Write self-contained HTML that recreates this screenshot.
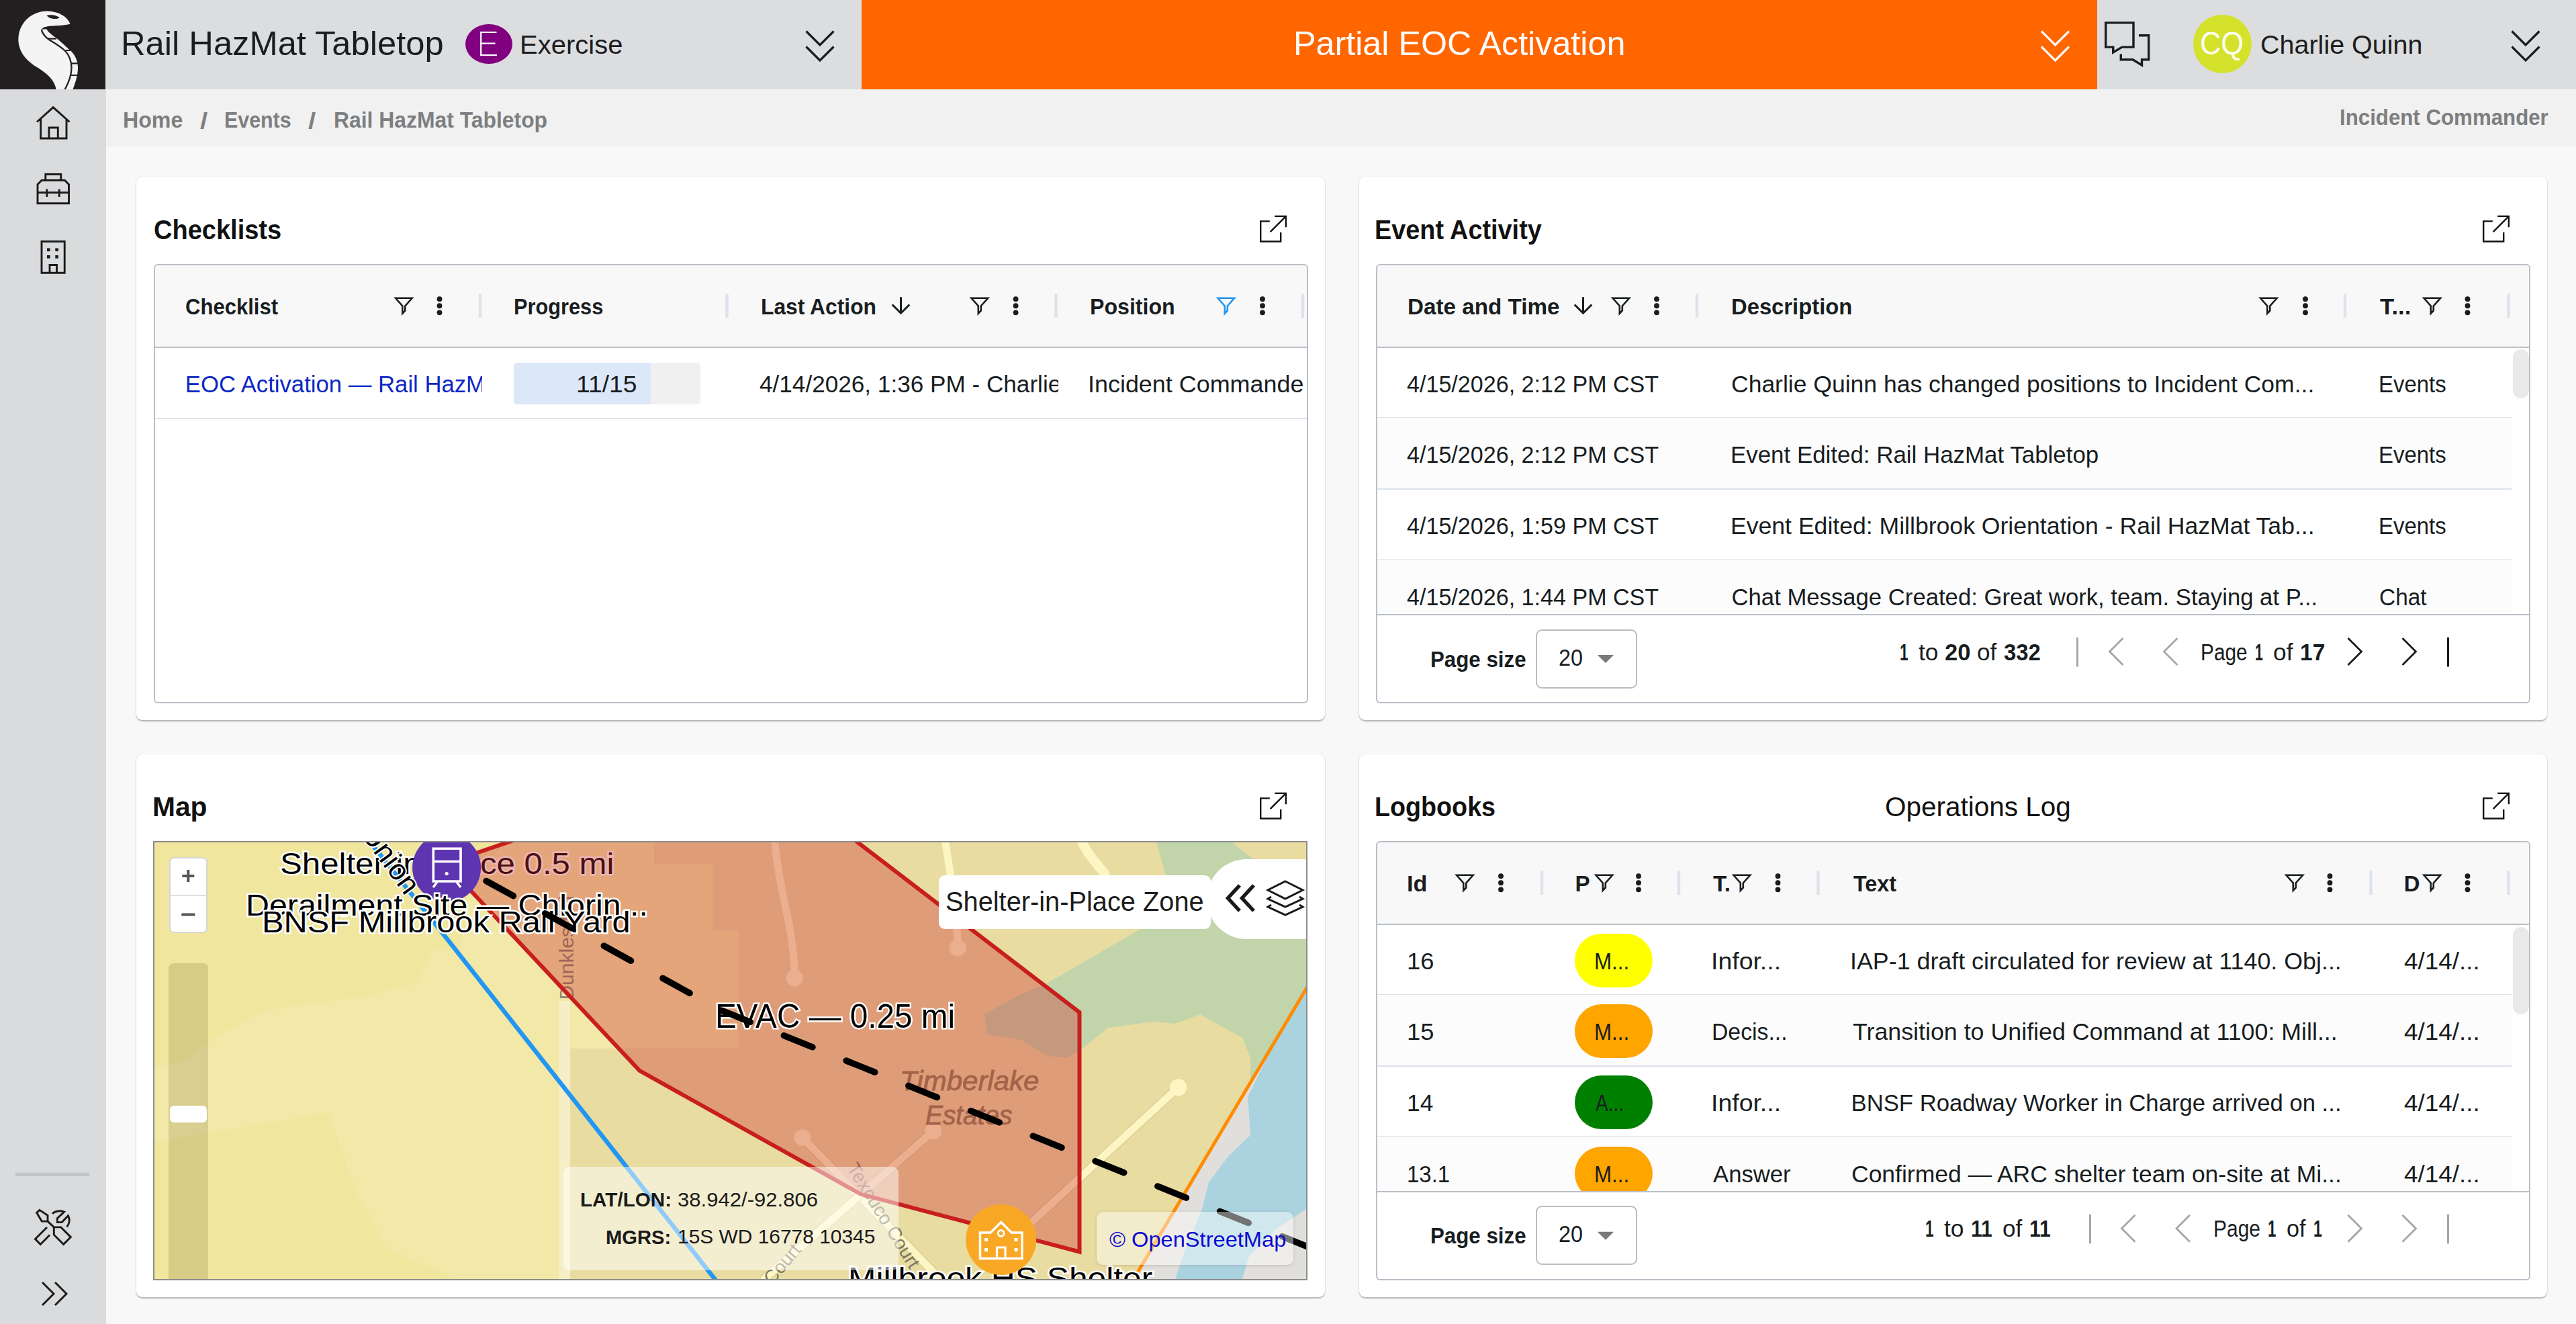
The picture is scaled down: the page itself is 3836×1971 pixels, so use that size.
<!DOCTYPE html><html><head><meta charset="utf-8"><style>
html,body{margin:0;padding:0;}
body{width:3836px;height:1971px;overflow:hidden;background:#f8f8f8;position:relative;font-family:"Liberation Sans",sans-serif;}
.a{position:absolute;}
.t{position:absolute;white-space:nowrap;line-height:1;}
.clip{position:absolute;overflow:hidden;}
.card{background:#fff;border-radius:9px;box-shadow:0 1.5px 2px rgba(0,0,0,0.26),0 0 3px rgba(0,0,0,0.06);}
</style></head><body><div class="a" style="left:158.00px;top:133.00px;width:3678.00px;height:85.00px;background:#f1f1f1;"></div><div class="t" id="t1" style="left:182.55px;top:162.15px;font-size:33px;color:#7d7e80;font-weight:700;transform:scaleX(0.9739);transform-origin:0 0;">Home</div><div class="t" id="t2" style="left:297.50px;top:163.45px;font-size:33px;color:#7d7e80;font-weight:700;transform:scaleX(1.2222);transform-origin:0 0;">/</div><div class="t" id="t3" style="left:334.16px;top:162.15px;font-size:33px;color:#7d7e80;font-weight:700;transform:scaleX(0.9202);transform-origin:0 0;">Events</div><div class="t" id="t4" style="left:458.50px;top:163.45px;font-size:33px;color:#7d7e80;font-weight:700;transform:scaleX(1.2222);transform-origin:0 0;">/</div><div class="t" id="t5" style="left:496.57px;top:162.15px;font-size:33px;color:#7d7e80;font-weight:700;transform:scaleX(0.9655);transform-origin:0 0;">Rail HazMat Tabletop</div><div class="t" id="t6" style="left:3483.61px;top:158.45px;font-size:33px;color:#7d7e80;font-weight:700;transform:scaleX(0.9468);transform-origin:0 0;">Incident Commander</div><div class="a card" style="left:203px;top:263px;width:1769.5px;height:808.5px;"></div><div class="a card" style="left:2023.5px;top:263px;width:1769.5px;height:808.5px;"></div><div class="a card" style="left:203px;top:1122.5px;width:1769.5px;height:808.5px;"></div><div class="a card" style="left:2023.5px;top:1122.5px;width:1769.5px;height:808.5px;"></div><div class="t" id="t7" style="left:228.55px;top:322.00px;font-size:40px;color:#111;font-weight:700;transform:scaleX(0.9502);transform-origin:0 0;">Checklists</div><div class="t" id="t8" style="left:2047.11px;top:322.00px;font-size:40px;color:#111;font-weight:700;transform:scaleX(0.9457);transform-origin:0 0;">Event Activity</div><div class="t" id="t9" style="left:227.46px;top:1180.50px;font-size:40px;color:#111;font-weight:700;transform:scaleX(1.0187);transform-origin:0 0;">Map</div><div class="t" id="t10" style="left:2047.12px;top:1180.50px;font-size:40px;color:#111;font-weight:700;transform:scaleX(0.9423);transform-origin:0 0;">Logbooks</div><div class="t" id="t11" style="left:2807.49px;top:1180.50px;font-size:40px;color:#111;transform:scaleX(1.0120);transform-origin:0 0;">Operations Log</div><div class="a" style="left:228.5px;top:393px;width:1719.0px;height:653.5px;border:2px solid #babfc7;border-radius:6px;box-sizing:border-box;background:#fff;overflow:hidden"><div class="a" style="left:0;top:0;right:0;height:120.5px;background:#f8f8f8;border-bottom:2px solid #babfc7"></div></div><div class="t" id="t12" style="left:276.07px;top:440.39px;font-size:33.3px;color:#181d1f;font-weight:700;transform:scaleX(0.9322);transform-origin:0 0;">Checklist</div><div class="t" id="t13" style="left:765.15px;top:440.39px;font-size:33.3px;color:#181d1f;font-weight:700;transform:scaleX(0.9236);transform-origin:0 0;">Progress</div><div class="t" id="t14" style="left:1133.09px;top:440.39px;font-size:33.3px;color:#181d1f;font-weight:700;transform:scaleX(0.9553);transform-origin:0 0;">Last Action</div><div class="t" id="t15" style="left:1623.07px;top:440.39px;font-size:33.3px;color:#181d1f;font-weight:700;transform:scaleX(0.9649);transform-origin:0 0;">Position</div><div class="a" style="left:230.50px;top:622.00px;width:1715.00px;height:2.00px;background:#dde2eb;"></div><div class="clip" style="left:277.80px;top:520.50px;width:440.70px;height:104.10px;"><div class="t" id="t16" style="left:-2.00px;top:34.70px;font-size:34.7px;color:#0c28c4;">EOC Activation — Rail HazMat Tabletop</div></div><div class="a" style="left:765px;top:540px;width:278px;height:61.5px;border-radius:6px;background:#f0f0f0;overflow:hidden"><div class="a" style="left:0;top:0;width:204px;height:61.5px;background:#dce7f8"></div></div><div class="t" id="t17" style="left:857.85px;top:555.21px;font-size:34.7px;color:#181d1f;transform:scaleX(1.0749);transform-origin:0 0;">11/15</div><div class="clip" style="left:1131.00px;top:520.50px;width:445.00px;height:104.10px;"><div class="t" id="t18" style="left:0.00px;top:34.70px;font-size:34.7px;color:#181d1f;transform:scaleX(1.0130);transform-origin:0 0;">4/14/2026, 1:36 PM - Charlie Quinn</div></div><div class="clip" style="left:1623.00px;top:520.50px;width:318.00px;height:104.10px;"><div class="t" id="t19" style="left:-3.11px;top:34.70px;font-size:34.7px;color:#181d1f;transform:scaleX(1.0355);transform-origin:0 0;">Incident Commander</div></div><div class="a" style="left:2048.5px;top:393px;width:1719.0px;height:653.5px;border:2px solid #babfc7;border-radius:6px;box-sizing:border-box;background:#fff;overflow:hidden"><div class="a" style="left:0;top:0;right:0;height:120.5px;background:#f8f8f8;border-bottom:2px solid #babfc7"></div></div><div class="t" id="t20" style="left:2095.60px;top:440.39px;font-size:33.3px;color:#181d1f;font-weight:700;transform:scaleX(0.9979);transform-origin:0 0;">Date and Time</div><div class="t" id="t21" style="left:2577.53px;top:440.39px;font-size:33.3px;color:#181d1f;font-weight:700;transform:scaleX(0.9843);transform-origin:0 0;">Description</div><div class="t" id="t22" style="left:3544.00px;top:440.39px;font-size:33.3px;color:#181d1f;font-weight:700;transform:scaleX(1.0439);transform-origin:0 0;">T...</div><div class="clip" style="left:0;top:0;width:3836px;height:914.5px"><div class="a" style="left:2050.50px;top:621.10px;width:1689.00px;height:2.00px;background:#dde2eb;"></div><div class="t" id="t23" style="left:2094.80px;top:554.80px;font-size:34.7px;color:#181d1f;transform:scaleX(0.9827);transform-origin:0 0;">4/15/2026, 2:12 PM CST</div><div class="t" id="t24" style="left:2578.48px;top:554.80px;font-size:34.7px;color:#181d1f;transform:scaleX(1.0234);transform-origin:0 0;">Charlie Quinn has changed positions to Incident Com...</div><div class="t" id="t25" style="left:3542.10px;top:554.80px;font-size:34.7px;color:#181d1f;transform:scaleX(0.9499);transform-origin:0 0;">Events</div><div class="a" style="left:2050.50px;top:622.10px;width:1689.00px;height:105.60px;background:#fcfcfc;"></div><div class="a" style="left:2050.50px;top:726.70px;width:1689.00px;height:2.00px;background:#dde2eb;"></div><div class="t" id="t26" style="left:2094.80px;top:660.40px;font-size:34.7px;color:#181d1f;transform:scaleX(0.9827);transform-origin:0 0;">4/15/2026, 2:12 PM CST</div><div class="t" id="t27" style="left:2577.49px;top:660.40px;font-size:34.7px;color:#181d1f;transform:scaleX(1.0058);transform-origin:0 0;">Event Edited: Rail HazMat Tabletop</div><div class="t" id="t28" style="left:3542.10px;top:660.40px;font-size:34.7px;color:#181d1f;transform:scaleX(0.9499);transform-origin:0 0;">Events</div><div class="a" style="left:2050.50px;top:832.30px;width:1689.00px;height:2.00px;background:#dde2eb;"></div><div class="t" id="t29" style="left:2094.80px;top:766.00px;font-size:34.7px;color:#181d1f;transform:scaleX(0.9827);transform-origin:0 0;">4/15/2026, 1:59 PM CST</div><div class="t" id="t30" style="left:2577.45px;top:766.00px;font-size:34.7px;color:#181d1f;transform:scaleX(1.0259);transform-origin:0 0;">Event Edited: Millbrook Orientation - Rail HazMat Tab...</div><div class="t" id="t31" style="left:3542.10px;top:766.00px;font-size:34.7px;color:#181d1f;transform:scaleX(0.9499);transform-origin:0 0;">Events</div><div class="a" style="left:2050.50px;top:833.30px;width:1689.00px;height:105.60px;background:#fcfcfc;"></div><div class="t" id="t32" style="left:2094.80px;top:871.60px;font-size:34.7px;color:#181d1f;transform:scaleX(0.9827);transform-origin:0 0;">4/15/2026, 1:44 PM CST</div><div class="t" id="t33" style="left:2578.50px;top:871.60px;font-size:34.7px;color:#181d1f;">Chat Message Created: Great work, team. Staying at P...</div><div class="t" id="t34" style="left:3543.04px;top:871.60px;font-size:34.7px;color:#181d1f;transform:scaleX(0.9637);transform-origin:0 0;">Chat</div></div><div class="a" style="left:3741.5px;top:520px;width:24px;height:72.5px;border-radius:12px;background:#e9e9e9"></div><div class="a" style="left:2050.50px;top:913.50px;width:1715.00px;height:2.00px;background:#babfc7;"></div><div class="t" id="t35" style="left:2130.32px;top:964.60px;font-size:33.3px;color:#181d1f;font-weight:700;transform:scaleX(0.9393);transform-origin:0 0;">Page size</div><div class="a" style="left:2286.5px;top:936.50px;width:151px;height:88px;border:2.5px solid #bcbcbc;border-radius:9px;box-sizing:border-box;background:#fff"></div><div class="t" id="t36" style="left:2320.87px;top:961.50px;font-size:34.7px;color:#181d1f;transform:scaleX(0.9341);transform-origin:0 0;">20</div><div class="t" id="t37" style="left:2828.99px;top:953.50px;font-size:34.7px;color:#181d1f;font-weight:700;transform:scaleX(0.6529);transform-origin:0 0;">1</div><div class="t" id="t38" style="left:2856.60px;top:953.50px;font-size:34.7px;color:#181d1f;transform:scaleX(1.0167);transform-origin:0 0;">to</div><div class="t" id="t39" style="left:2895.80px;top:953.50px;font-size:34.7px;color:#181d1f;font-weight:700;transform:scaleX(0.9975);transform-origin:0 0;">20</div><div class="t" id="t40" style="left:2943.99px;top:953.50px;font-size:34.7px;color:#181d1f;transform:scaleX(1.0109);transform-origin:0 0;">of</div><div class="t" id="t41" style="left:2983.80px;top:953.50px;font-size:34.7px;color:#181d1f;font-weight:700;transform:scaleX(0.9473);transform-origin:0 0;">332</div><div class="t" id="t42" style="left:3277.18px;top:953.50px;font-size:34.7px;color:#181d1f;transform:scaleX(0.8595);transform-origin:0 0;">Page</div><div class="t" id="t43" style="left:3358.46px;top:953.50px;font-size:34.7px;color:#181d1f;font-weight:700;transform:scaleX(0.6176);transform-origin:0 0;">1</div><div class="t" id="t44" style="left:3384.98px;top:953.50px;font-size:34.7px;color:#181d1f;transform:scaleX(1.0180);transform-origin:0 0;">of</div><div class="t" id="t45" style="left:3424.86px;top:953.50px;font-size:34.7px;color:#181d1f;font-weight:700;transform:scaleX(0.9691);transform-origin:0 0;">17</div><div class="a" style="left:2048.5px;top:1252px;width:1719.0px;height:653.5px;border:2px solid #babfc7;border-radius:6px;box-sizing:border-box;background:#fff;overflow:hidden"><div class="a" style="left:0;top:0;right:0;height:120.5px;background:#f8f8f8;border-bottom:2px solid #babfc7"></div></div><div class="t" id="t46" style="left:2094.94px;top:1299.39px;font-size:33.3px;color:#181d1f;font-weight:700;transform:scaleX(1.0285);transform-origin:0 0;">Id</div><div class="t" id="t47" style="left:2345.50px;top:1299.39px;font-size:33.3px;color:#181d1f;font-weight:700;">P</div><div class="clip" style="left:2551.00px;top:1266.10px;width:24.00px;height:99.90px;"><div class="t" id="t48" style="left:0.00px;top:33.30px;font-size:33.3px;color:#181d1f;font-weight:700;">T.</div></div><div class="t" id="t49" style="left:2759.50px;top:1299.39px;font-size:33.3px;color:#181d1f;font-weight:700;transform:scaleX(0.9711);transform-origin:0 0;">Text</div><div class="clip" style="left:3581.50px;top:1266.10px;width:22.50px;height:99.90px;"><div class="t" id="t50" style="left:-2.00px;top:33.30px;font-size:33.3px;color:#181d1f;font-weight:700;">D.</div></div><div class="clip" style="left:0;top:0;width:3836px;height:1773.5px"><div class="a" style="left:2050.50px;top:1480.10px;width:1689.00px;height:2.00px;background:#dde2eb;"></div><div class="t" id="t51" style="left:2094.90px;top:1413.81px;font-size:34.7px;color:#181d1f;transform:scaleX(1.0484);transform-origin:0 0;">16</div><div class="a" style="left:2345px;top:1389.80px;width:116px;height:80px;border-radius:40px;background:#ffff00"></div><div class="t" id="t52" style="left:2374.19px;top:1413.81px;font-size:34.7px;color:#181d1f;transform:scaleX(0.9028);transform-origin:0 0;">M...</div><div class="t" id="t53" style="left:2547.76px;top:1413.81px;font-size:34.7px;color:#181d1f;transform:scaleX(1.0797);transform-origin:0 0;">Infor...</div><div class="t" id="t54" style="left:2755.40px;top:1413.81px;font-size:34.7px;color:#181d1f;transform:scaleX(1.0324);transform-origin:0 0;">IAP-1 draft circulated for review at 1140. Obj...</div><div class="t" id="t55" style="left:3580.00px;top:1413.81px;font-size:34.7px;color:#181d1f;transform:scaleX(1.0636);transform-origin:0 0;">4/14/...</div><div class="a" style="left:2050.50px;top:1481.10px;width:1689.00px;height:105.60px;background:#fcfcfc;"></div><div class="a" style="left:2050.50px;top:1585.70px;width:1689.00px;height:2.00px;background:#dde2eb;"></div><div class="t" id="t56" style="left:2094.90px;top:1519.40px;font-size:34.7px;color:#181d1f;transform:scaleX(1.0484);transform-origin:0 0;">15</div><div class="a" style="left:2345px;top:1495.40px;width:116px;height:80px;border-radius:40px;background:#ffa500"></div><div class="t" id="t57" style="left:2374.19px;top:1519.40px;font-size:34.7px;color:#181d1f;transform:scaleX(0.9028);transform-origin:0 0;">M...</div><div class="t" id="t58" style="left:2549.05px;top:1519.40px;font-size:34.7px;color:#181d1f;transform:scaleX(0.9729);transform-origin:0 0;">Decis...</div><div class="t" id="t59" style="left:2758.50px;top:1519.40px;font-size:34.7px;color:#181d1f;transform:scaleX(1.0313);transform-origin:0 0;">Transition to Unified Command at 1100: Mill...</div><div class="t" id="t60" style="left:3580.00px;top:1519.40px;font-size:34.7px;color:#181d1f;transform:scaleX(1.0636);transform-origin:0 0;">4/14/...</div><div class="a" style="left:2050.50px;top:1691.30px;width:1689.00px;height:2.00px;background:#dde2eb;"></div><div class="t" id="t61" style="left:2094.96px;top:1625.01px;font-size:34.7px;color:#181d1f;transform:scaleX(1.0195);transform-origin:0 0;">14</div><div class="a" style="left:2345px;top:1601.00px;width:116px;height:80px;border-radius:40px;background:#008000"></div><div class="t" id="t62" style="left:2376.00px;top:1625.01px;font-size:34.7px;color:#181d1f;transform:scaleX(0.8095);transform-origin:0 0;">A...</div><div class="t" id="t63" style="left:2547.76px;top:1625.01px;font-size:34.7px;color:#181d1f;transform:scaleX(1.0797);transform-origin:0 0;">Infor...</div><div class="t" id="t64" style="left:2756.50px;top:1625.01px;font-size:34.7px;color:#181d1f;">BNSF Roadway Worker in Charge arrived on ...</div><div class="t" id="t65" style="left:3580.00px;top:1625.01px;font-size:34.7px;color:#181d1f;transform:scaleX(1.0636);transform-origin:0 0;">4/14/...</div><div class="a" style="left:2050.50px;top:1692.30px;width:1689.00px;height:105.60px;background:#fcfcfc;"></div><div class="t" id="t66" style="left:2095.10px;top:1730.61px;font-size:34.7px;color:#181d1f;transform:scaleX(0.9499);transform-origin:0 0;">13.1</div><div class="a" style="left:2345px;top:1706.60px;width:116px;height:80px;border-radius:40px;background:#ffa500"></div><div class="t" id="t67" style="left:2374.19px;top:1730.61px;font-size:34.7px;color:#181d1f;transform:scaleX(0.9028);transform-origin:0 0;">M...</div><div class="t" id="t68" style="left:2551.00px;top:1730.61px;font-size:34.7px;color:#181d1f;">Answer</div><div class="t" id="t69" style="left:2757.48px;top:1730.61px;font-size:34.7px;color:#181d1f;transform:scaleX(1.0231);transform-origin:0 0;">Confirmed — ARC shelter team on-site at Mi...</div><div class="t" id="t70" style="left:3580.00px;top:1730.61px;font-size:34.7px;color:#181d1f;transform:scaleX(1.0636);transform-origin:0 0;">4/14/...</div></div><div class="a" style="left:3741.5px;top:1380px;width:24px;height:130px;border-radius:12px;background:#e9e9e9"></div><div class="a" style="left:2050.50px;top:1772.50px;width:1715.00px;height:2.00px;background:#babfc7;"></div><div class="t" id="t71" style="left:2130.32px;top:1823.35px;font-size:33.3px;color:#181d1f;font-weight:700;transform:scaleX(0.9393);transform-origin:0 0;">Page size</div><div class="a" style="left:2286.5px;top:1795.25px;width:151px;height:88px;border:2.5px solid #bcbcbc;border-radius:9px;box-sizing:border-box;background:#fff"></div><div class="t" id="t72" style="left:2320.87px;top:1820.26px;font-size:34.7px;color:#181d1f;transform:scaleX(0.9341);transform-origin:0 0;">20</div><div class="t" id="t73" style="left:2867.31px;top:1812.26px;font-size:34.7px;color:#181d1f;font-weight:700;transform:scaleX(0.6471);transform-origin:0 0;">1</div><div class="t" id="t74" style="left:2894.60px;top:1812.26px;font-size:34.7px;color:#181d1f;transform:scaleX(1.0204);transform-origin:0 0;">to</div><div class="t" id="t75" style="left:2935.27px;top:1812.26px;font-size:34.7px;color:#181d1f;font-weight:700;transform:scaleX(0.8669);transform-origin:0 0;">11</div><div class="t" id="t76" style="left:2981.99px;top:1812.26px;font-size:34.7px;color:#181d1f;transform:scaleX(1.0109);transform-origin:0 0;">of</div><div class="t" id="t77" style="left:3022.07px;top:1812.26px;font-size:34.7px;color:#181d1f;font-weight:700;transform:scaleX(0.8669);transform-origin:0 0;">11</div><div class="t" id="t78" style="left:3296.17px;top:1812.26px;font-size:34.7px;color:#181d1f;transform:scaleX(0.8634);transform-origin:0 0;">Page</div><div class="t" id="t79" style="left:3377.32px;top:1812.26px;font-size:34.7px;color:#181d1f;font-weight:700;transform:scaleX(0.6412);transform-origin:0 0;">1</div><div class="t" id="t80" style="left:3404.81px;top:1812.26px;font-size:34.7px;color:#181d1f;transform:scaleX(0.9862);transform-origin:0 0;">of</div><div class="t" id="t81" style="left:3444.77px;top:1812.26px;font-size:34.7px;color:#181d1f;font-weight:700;transform:scaleX(0.6647);transform-origin:0 0;">1</div><div class="clip" style="left:230px;top:1254px;width:1715px;height:650px"><div class="a" style="left:-230px;top:-1254px;width:3836px;height:1971px"><svg class="a" style="left:230px;top:1254px" width="1715" height="650" viewBox="230 1254 1715 650"><rect x="230" y="1254" width="1715" height="650" fill="#f2e8a7"/><path d="M230 1254 H760 L700 1300 L684.7 1416.7 L644.7 1413 L621 1463 L544.7 1483 L394.7 1503 L311 1550 L278 1577 L230 1590 Z" fill="#f0e69d"/><path d="M230 1700 L489 1657 L528 1769 L576 1859 L678 1904 L230 1904 Z" fill="#f0e69d"/><path d="M974 1254 H1945 V1904 H849 V1560.7 H1099.6 V1384.8 H1061.3 V1285.7 H974 Z" fill="#e9dca1"/><path d="M1722 1254 L1835 1254 L1880 1290 L1945 1300 L1945 1640 L1862 1640 L1862 1575 L1850 1545 L1787 1510 L1750 1524 L1717 1521 L1650 1530 L1610 1562 L1590 1575 L1560 1572 L1520 1548 L1470 1540 L1466 1510 L1520 1480 L1557 1465 L1695 1385 L1740 1360 L1735 1300 Z" fill="#c2d5aa"/><path d="M1945 1470 L1690.6 1904 L1945 1904 Z" fill="#e0dfdc"/><path d="M1945 1465 L1945 1800 L1900 1830 L1860 1870 L1850 1904 L1750 1904 L1765 1860 L1790 1800 L1800 1760 L1830 1720 L1862 1690 L1858 1633 L1900 1548 Z" fill="#aad3df"/><rect x="832" y="1490" width="17" height="414" fill="#f6eec6"/><path d="M1754.7 1618.8 L1470 1880" stroke="#dccf98" stroke-width="14" fill="none" stroke-linecap="round"/><path d="M1754.7 1618.8 L1470 1880" stroke="#fdf6c4" stroke-width="11" fill="none" stroke-linecap="round"/><circle cx="1754.7" cy="1618.8" r="12.5" fill="#fdf6c4"/><path d="M1195 1693.4 L1400 1904" stroke="#dccf98" stroke-width="14" fill="none" stroke-linecap="round"/><path d="M1195 1693.4 L1400 1904" stroke="#fdf6c4" stroke-width="11" fill="none" stroke-linecap="round"/><circle cx="1195" cy="1693.4" r="12.5" fill="#fdf6c4"/><path d="M1389.8 1683.8 L1138 1904" stroke="#dccf98" stroke-width="14" fill="none" stroke-linecap="round"/><path d="M1389.8 1683.8 L1138 1904" stroke="#fdf6c4" stroke-width="11" fill="none" stroke-linecap="round"/><circle cx="1389.8" cy="1683.8" r="12.5" fill="#fdf6c4"/><path d="M1153.8 1254 C1160 1330 1183 1380 1183 1456" stroke="#fdf6c4" stroke-width="11" fill="none" stroke-linecap="round"/><circle cx="1183" cy="1456" r="12.5" fill="#fdf6c4"/><path d="M1407.7 1254 C1415 1300 1426 1360 1426 1411" stroke="#fdf6c4" stroke-width="11" fill="none" stroke-linecap="round"/><circle cx="1426" cy="1411" r="12.5" fill="#fdf6c4"/><path d="M1610 1250 C1618 1270 1632 1285 1645 1300" stroke="#fdf6c4" stroke-width="14" fill="none" stroke-linecap="round"/></svg><div class="t" id="t82" style="left:416.81px;top:1263.45px;font-size:45px;color:#000;-webkit-text-stroke:5px #ffffff;paint-order:stroke fill;transform:scaleX(1.0929);transform-origin:0 0;">Shelter-in-Place 0.5 mi</div><div class="t" style="left:764px;top:1396px;font-size:30px;color:#8a8470;transform:rotate(-90deg);transform-origin:50% 50%;width:160px;text-align:center">Dunkles Rd</div><div class="t" id="t83" style="left:1339.65px;top:1589.00px;font-size:40px;color:#8f7f5a;font-style:italic;-webkit-text-stroke:0.8px #8f7f5a;transform:scaleX(1.0505);transform-origin:0 0;">Timberlake</div><div class="t" id="t84" style="left:1377.83px;top:1640.00px;font-size:40px;color:#8f7f5a;font-style:italic;-webkit-text-stroke:0.8px #8f7f5a;transform:scaleX(0.9706);transform-origin:0 0;">Estates</div><div class="t" style="left:1228px;top:1792px;font-size:28px;color:#7c7766;transform:rotate(58deg);transform-origin:50% 50%;width:170px;text-align:center">Texcuco Court</div><div class="t" style="left:1120px;top:1868px;font-size:28px;color:#7c7766;transform:rotate(-50deg);transform-origin:50% 50%;width:90px;text-align:center">Court</div><svg class="a" style="left:230px;top:1254px" width="1715" height="650" viewBox="230 1254 1715 650"><path d="M695.4 1320 L708.7 1270 L797 1240 L1259 1240 L1607.5 1507 L1607.5 1863.5 L1282 1777.8 L952.4 1593.9 Z" fill="rgba(203,47,47,0.36)" stroke="#c81e1e" stroke-width="6" stroke-linejoin="miter"/><path d="M548.5 1250 L662 1393 L1066 1906" stroke="#2196f3" stroke-width="6.5" fill="none"/><path d="M1950 1463.7 L1687 1906" stroke="#ff8c00" stroke-width="5" fill="none"/></svg><svg class="a" style="left:230px;top:1254px" width="1715" height="650" viewBox="230 1254 1715 650">
<circle cx="665.1" cy="1291.7" r="51" fill="#5e35b1"/>
<path d="M645.3 1263.3 H686 V1312 H645.3 Z M645.3 1282.5 H686" fill="none" stroke="#fff" stroke-width="3.6"/>
<circle cx="665.2" cy="1300.5" r="2.6" fill="#fff"/>
<path d="M651 1313 L645 1321 M680 1313 L686 1321" stroke="#fff" stroke-width="3.4"/>
</svg><div class="t" style="left:521.5px;top:1257px;width:120px;height:44px;text-align:center;font-size:44px;color:#000;-webkit-text-stroke:4px #fff;paint-order:stroke fill;transform:rotate(54deg);transform-origin:50% 50%;">Union</div><div class="t" id="t85" style="left:366.38px;top:1324.85px;font-size:45px;color:#000;-webkit-text-stroke:5px #ffffff;paint-order:stroke fill;transform:scaleX(1.0740);transform-origin:0 0;">Derailment Site — Chlorin...</div><div class="t" id="t86" style="left:390.45px;top:1350.15px;font-size:45px;color:#000;-webkit-text-stroke:5px #ffffff;paint-order:stroke fill;transform:scaleX(1.0842);transform-origin:0 0;">BNSF Millbrook Rail Yard</div><div class="t" id="t87" style="left:1065.38px;top:1487.80px;font-size:50px;color:#000;-webkit-text-stroke:5px #ffffff;paint-order:stroke fill;transform:scaleX(0.9545);transform-origin:0 0;">EVAC — 0.25 mi</div><div class="t" id="t88" style="left:1263.48px;top:1879.75px;font-size:45px;color:#000;-webkit-text-stroke:5px #ffffff;paint-order:stroke fill;transform:scaleX(1.1052);transform-origin:0 0;">Millbrook HS Shelter</div><svg class="a" style="left:230px;top:1254px" width="1715" height="650" viewBox="230 1254 1715 650"><path d="M724.1 1311.5 L1072 1503.2 L1960 1861.1" stroke="#000" stroke-width="9.5" stroke-linecap="round" stroke-linejoin="round" stroke-dasharray="46 54" fill="none"/></svg><svg class="a" style="left:230px;top:1254px" width="1715" height="650" viewBox="230 1254 1715 650">
<circle cx="1490.7" cy="1845.5" r="52.5" fill="#f9a825"/>
<path d="M1459.5 1873.5 V1835 H1475 L1490.7 1819.5 L1506.4 1835 H1522 V1873.5 Z" fill="none" stroke="#fff" stroke-width="3.4"/>
<circle cx="1490.7" cy="1836" r="4.5" fill="none" stroke="#fff" stroke-width="2.8"/>
<path d="M1484.5 1873.5 V1857 H1497 V1873.5" fill="none" stroke="#fff" stroke-width="3.2"/>
<rect x="1466" y="1843" width="5" height="5" fill="#fff"/><rect x="1510.5" y="1843" width="5" height="5" fill="#fff"/>
<rect x="1466" y="1858" width="5" height="5" fill="#fff"/><rect x="1510.5" y="1858" width="5" height="5" fill="#fff"/>
</svg><div class="a" style="left:252px;top:1276px;width:56.7px;height:113.3px;border-radius:7px;background:#fff;border:2px solid rgba(0,0,0,0.16);box-sizing:border-box"></div><div class="a" style="left:254.00px;top:1332.00px;width:52.70px;height:2.00px;background:rgba(0,0,0,0.12);"></div><svg class="a" style="left:252px;top:1276px" width="57" height="114" viewBox="252 1276 57 114"><path d="M280.3 1295 V1313 M271.3 1304 H289.3" stroke="#555" stroke-width="4"/><path d="M270.3 1361.5 H290.3" stroke="#555" stroke-width="4"/></svg><div class="a" style="left:250.7px;top:1434px;width:59px;height:500px;border-radius:8px;background:rgba(60,50,0,0.14)"></div><div class="a" style="left:253px;top:1646px;width:55.3px;height:24.7px;border-radius:6px;background:#fff"></div><div class="a" style="left:1797px;top:1278.7px;width:200px;height:119.3px;border-radius:60px;background:#fff"></div><div class="a" style="left:1398px;top:1303px;width:405px;height:80px;border-radius:9px;background:#fff"></div><div class="t" id="t89" style="left:1407.53px;top:1321.95px;font-size:41px;color:#1c1c1c;transform:scaleX(0.9702);transform-origin:0 0;">Shelter-in-Place Zone</div><svg class="a" style="left:1800px;top:1290px" width="146" height="90" viewBox="1800 1290 146 90">
<path d="M1846 1318 L1828.5 1337 L1846 1356 M1867 1318 L1849.5 1337 L1867 1356" fill="none" stroke="#1a1a1a" stroke-width="5.5"/>
<path d="M1914 1312 L1940 1325 L1914 1338 L1888 1325 Z" fill="none" stroke="#1a1a1a" stroke-width="3"/>
<path d="M1893 1335 L1888 1338 L1914 1350 L1940 1338 L1935 1335 M1893 1347 L1888 1350 L1914 1362 L1940 1350 L1935 1347" fill="none" stroke="#1a1a1a" stroke-width="3"/>
</svg><div class="a" style="left:839px;top:1737px;width:498.7px;height:154px;border-radius:9px;background:rgba(255,255,255,0.5)"></div><div class="t" id="t90" style="left:863.62px;top:1771.30px;font-size:30px;color:#1a1a1a;font-weight:700;transform:scaleX(0.9884);transform-origin:0 0;">LAT/LON:</div><div class="t" id="t91" style="left:1008.66px;top:1770.80px;font-size:30px;color:#1a1a1a;transform:scaleX(1.0357);transform-origin:0 0;">38.942/-92.806</div><div class="t" id="t92" style="left:902.45px;top:1827.00px;font-size:30px;color:#1a1a1a;font-weight:700;transform:scaleX(0.9729);transform-origin:0 0;">MGRS:</div><div class="t" id="t93" style="left:1009.01px;top:1826.20px;font-size:30px;color:#1a1a1a;transform:scaleX(0.9972);transform-origin:0 0;">15S WD 16778 10345</div><div class="a" style="left:1633px;top:1804.3px;width:293px;height:79.2px;border-radius:9px;background:rgba(255,255,255,0.45);box-shadow:0 1px 5px rgba(0,0,0,0.15)"></div><div class="t" id="t94" style="left:1651.50px;top:1829.40px;font-size:32px;color:#0b0bd0;transform:scaleX(1.0191);transform-origin:0 0;">© OpenStreetMap</div><div class="a" style="left:228px;top:1252px;width:1719px;height:654px;border:2px solid #8c8c8c;box-sizing:border-box"></div></div></div><div class="a" style="left:228px;top:1252px;width:1719px;height:654px;border:2px solid #8c8c8c;box-sizing:border-box"></div><svg class="a" style="left:0;top:0" width="3836" height="1971" viewBox="0 0 3836 1971"><path d="M1890.8 329.4 H1877.2 V359.5 H1907.2 V346.1 M1891.7 345.2 L1914.9 321.9 M1898.3 321.9 H1914.9 V338.2" fill="none" stroke="#111" stroke-width="2.4"/><path d="M3711.8 329.4 H3698.2 V359.5 H3728.2 V346.1 M3712.7 345.2 L3735.9 321.9 M3719.3 321.9 H3735.9 V338.2" fill="none" stroke="#111" stroke-width="2.4"/><path d="M1890.8 1188.4 H1877.2 V1218.5 H1907.2 V1205.1 M1891.7 1204.2 L1914.9 1180.9 M1898.3 1180.9 H1914.9 V1197.2" fill="none" stroke="#111" stroke-width="2.4"/><path d="M3711.8 1188.4 H3698.2 V1218.5 H3728.2 V1205.1 M3712.7 1204.2 L3735.9 1180.9 M3719.3 1180.9 H3735.9 V1197.2" fill="none" stroke="#111" stroke-width="2.4"/><path d="M589.0 443.75 H613.7 L603.3 455.45 V462.45 L599.3 466.75 V455.45 Z" fill="none" stroke="#181d1f" stroke-width="2.6" stroke-linejoin="miter"/><circle cx="654.5" cy="445.15" r="3.9" fill="#181d1f"/><circle cx="654.5" cy="455.25" r="3.9" fill="#181d1f"/><circle cx="654.5" cy="465.35" r="3.9" fill="#181d1f"/><rect x="712.75" y="437.45" width="4.5" height="35.6" fill="#dde2eb"/><rect x="1080.25" y="437.45" width="4.5" height="35.6" fill="#dde2eb"/><path d="M1341.5 442.25 V466.75 M1328.7 453.45 L1341.5 466.25 L1354.3 453.45" fill="none" stroke="#181d1f" stroke-width="3"/><path d="M1446.5 443.75 H1471.2 L1460.8 455.45 V462.45 L1456.8 466.75 V455.45 Z" fill="none" stroke="#181d1f" stroke-width="2.6" stroke-linejoin="miter"/><circle cx="1512.6" cy="445.15" r="3.9" fill="#181d1f"/><circle cx="1512.6" cy="455.25" r="3.9" fill="#181d1f"/><circle cx="1512.6" cy="465.35" r="3.9" fill="#181d1f"/><rect x="1570.25" y="437.45" width="4.5" height="35.6" fill="#dde2eb"/><path d="M1813.5 443.75 H1838.2 L1827.8 455.45 V462.45 L1823.8 466.75 V455.45 Z" fill="none" stroke="#2196f3" stroke-width="2.6" stroke-linejoin="miter"/><circle cx="1880" cy="445.15" r="3.9" fill="#181d1f"/><circle cx="1880" cy="455.25" r="3.9" fill="#181d1f"/><circle cx="1880" cy="465.35" r="3.9" fill="#181d1f"/><rect x="1937.75" y="437.45" width="4.5" height="35.6" fill="#dde2eb"/><path d="M2357.5 442.25 V466.75 M2344.7 453.45 L2357.5 466.25 L2370.3 453.45" fill="none" stroke="#181d1f" stroke-width="3"/><path d="M2401.5 443.75 H2426.2 L2415.8 455.45 V462.45 L2411.8 466.75 V455.45 Z" fill="none" stroke="#181d1f" stroke-width="2.6" stroke-linejoin="miter"/><circle cx="2467" cy="445.15" r="3.9" fill="#181d1f"/><circle cx="2467" cy="455.25" r="3.9" fill="#181d1f"/><circle cx="2467" cy="465.35" r="3.9" fill="#181d1f"/><rect x="2524.75" y="437.45" width="4.5" height="35.6" fill="#dde2eb"/><path d="M3366.0 443.75 H3390.7 L3380.3 455.45 V462.45 L3376.3 466.75 V455.45 Z" fill="none" stroke="#181d1f" stroke-width="2.6" stroke-linejoin="miter"/><circle cx="3433" cy="445.15" r="3.9" fill="#181d1f"/><circle cx="3433" cy="455.25" r="3.9" fill="#181d1f"/><circle cx="3433" cy="465.35" r="3.9" fill="#181d1f"/><rect x="3489.75" y="437.45" width="4.5" height="35.6" fill="#dde2eb"/><path d="M3609.5 443.75 H3634.2 L3623.8 455.45 V462.45 L3619.8 466.75 V455.45 Z" fill="none" stroke="#181d1f" stroke-width="2.6" stroke-linejoin="miter"/><circle cx="3674.5" cy="445.15" r="3.9" fill="#181d1f"/><circle cx="3674.5" cy="455.25" r="3.9" fill="#181d1f"/><circle cx="3674.5" cy="465.35" r="3.9" fill="#181d1f"/><rect x="3733.25" y="437.45" width="4.5" height="35.6" fill="#dde2eb"/><path d="M2378.8 975.0 H2403.1 L2390.95 987.1 Z" fill="#7a7a7a"/><rect x="3092" y="949.0" width="3" height="43.5" fill="#a6a6a6"/><path d="M3161.5 950.0 L3141.5 970.0 L3161.5 990.0" fill="none" stroke="#a6a6a6" stroke-width="2.8"/><path d="M3242.5 950.0 L3222.5 970.0 L3242.5 990.0" fill="none" stroke="#a6a6a6" stroke-width="2.8"/><path d="M3496.5 950.0 L3516.5 970.0 L3496.5 990.0" fill="none" stroke="#181d1f" stroke-width="2.8"/><path d="M3577.5 950.0 L3597.5 970.0 L3577.5 990.0" fill="none" stroke="#181d1f" stroke-width="2.8"/><rect x="3644" y="949.0" width="3" height="43.5" fill="#181d1f"/><path d="M2169.0 1302.75 H2193.7 L2183.3 1314.45 V1321.45 L2179.3 1325.75 V1314.45 Z" fill="none" stroke="#181d1f" stroke-width="2.6" stroke-linejoin="miter"/><circle cx="2235" cy="1304.15" r="3.9" fill="#181d1f"/><circle cx="2235" cy="1314.25" r="3.9" fill="#181d1f"/><circle cx="2235" cy="1324.35" r="3.9" fill="#181d1f"/><rect x="2293.75" y="1296.45" width="4.5" height="35.6" fill="#dde2eb"/><path d="M2376.5 1302.75 H2401.2 L2390.8 1314.45 V1321.45 L2386.8 1325.75 V1314.45 Z" fill="none" stroke="#181d1f" stroke-width="2.6" stroke-linejoin="miter"/><circle cx="2440" cy="1304.15" r="3.9" fill="#181d1f"/><circle cx="2440" cy="1314.25" r="3.9" fill="#181d1f"/><circle cx="2440" cy="1324.35" r="3.9" fill="#181d1f"/><rect x="2497.75" y="1296.45" width="4.5" height="35.6" fill="#dde2eb"/><path d="M2581.5 1302.75 H2606.2 L2595.8 1314.45 V1321.45 L2591.8 1325.75 V1314.45 Z" fill="none" stroke="#181d1f" stroke-width="2.6" stroke-linejoin="miter"/><circle cx="2647.5" cy="1304.15" r="3.9" fill="#181d1f"/><circle cx="2647.5" cy="1314.25" r="3.9" fill="#181d1f"/><circle cx="2647.5" cy="1324.35" r="3.9" fill="#181d1f"/><rect x="2705.25" y="1296.45" width="4.5" height="35.6" fill="#dde2eb"/><path d="M3404.5 1302.75 H3429.2 L3418.8 1314.45 V1321.45 L3414.8 1325.75 V1314.45 Z" fill="none" stroke="#181d1f" stroke-width="2.6" stroke-linejoin="miter"/><circle cx="3469.5" cy="1304.15" r="3.9" fill="#181d1f"/><circle cx="3469.5" cy="1314.25" r="3.9" fill="#181d1f"/><circle cx="3469.5" cy="1324.35" r="3.9" fill="#181d1f"/><rect x="3528.25" y="1296.45" width="4.5" height="35.6" fill="#dde2eb"/><path d="M3609.5 1302.75 H3634.2 L3623.8 1314.45 V1321.45 L3619.8 1325.75 V1314.45 Z" fill="none" stroke="#181d1f" stroke-width="2.6" stroke-linejoin="miter"/><circle cx="3674.5" cy="1304.15" r="3.9" fill="#181d1f"/><circle cx="3674.5" cy="1314.25" r="3.9" fill="#181d1f"/><circle cx="3674.5" cy="1324.35" r="3.9" fill="#181d1f"/><rect x="3733.25" y="1296.45" width="4.5" height="35.6" fill="#dde2eb"/><path d="M2378.8 1833.75 H2403.1 L2390.95 1845.85 Z" fill="#7a7a7a"/><rect x="3111" y="1807.75" width="3" height="43.5" fill="#a6a6a6"/><path d="M3179.5 1808.75 L3159.5 1828.75 L3179.5 1848.75" fill="none" stroke="#a6a6a6" stroke-width="2.8"/><path d="M3261.0 1808.75 L3241.0 1828.75 L3261.0 1848.75" fill="none" stroke="#a6a6a6" stroke-width="2.8"/><path d="M3496.5 1808.75 L3516.5 1828.75 L3496.5 1848.75" fill="none" stroke="#a6a6a6" stroke-width="2.8"/><path d="M3577.5 1808.75 L3597.5 1828.75 L3577.5 1848.75" fill="none" stroke="#a6a6a6" stroke-width="2.8"/><rect x="3644" y="1807.75" width="3" height="43.5" fill="#a6a6a6"/></svg><div class="a" style="left:156.50px;top:0.00px;width:1126.00px;height:133.00px;background:#dcdddf;"></div><div class="a" style="left:1282.50px;top:0.00px;width:1840.50px;height:133.00px;background:#ff6600;"></div><div class="a" style="left:3123.00px;top:0.00px;width:713.00px;height:133.00px;background:#dcdddf;"></div><div class="t" id="t95" style="left:180.35px;top:40.25px;font-size:50px;color:#1b1c1e;transform:scaleX(1.0132);transform-origin:0 0;">Rail HazMat Tabletop</div><div class="a" style="left:692.8px;top:36px;width:70.2px;height:59.4px;border-radius:50%;background:#800080"></div><svg class="a" style="left:700px;top:40px" width="50" height="50" viewBox="700 40 50 50"><path d="M739.5 48 H716.2 V82 H740 M716.2 64.6 H737.5" fill="none" stroke="#fff" stroke-width="2.2"/></svg><div class="t" id="t96" style="left:773.92px;top:46.65px;font-size:39px;color:#1b1c1e;transform:scaleX(1.0259);transform-origin:0 0;">Exercise</div><div class="t" id="t97" style="left:1926.28px;top:40.40px;font-size:50px;color:#fff;transform:scaleX(1.0051);transform-origin:0 0;">Partial EOC Activation</div><div class="t" id="t98" style="left:3365.99px;top:47.05px;font-size:39px;color:#1b1c1e;transform:scaleX(1.0129);transform-origin:0 0;">Charlie Quinn</div><div class="a" style="left:3266px;top:21.6px;width:87px;height:87px;border-radius:50%;background:#d5e22b"></div><div class="t" id="t99" style="left:3275.99px;top:41.40px;font-size:48px;color:#fdfdf0;transform:scaleX(0.9044);transform-origin:0 0;">CQ</div><svg class="a" style="left:0;top:0" width="3836" height="133" viewBox="0 0 3836 133"><path d="M1200.5 46.5 L1221.0 67.0 L1241.5 46.5 M1200.5 69.5 L1221.0 90.0 L1241.5 69.5" fill="none" stroke="#1b1c1e" stroke-width="3.2"/><path d="M3040 46.5 L3060.5 67.0 L3081 46.5 M3040 69.5 L3060.5 90.0 L3081 69.5" fill="none" stroke="#ffffff" stroke-width="3.2"/><path d="M3740.5 46.5 L3761.0 67.0 L3781.5 46.5 M3740.5 69.5 L3761.0 90.0 L3781.5 69.5" fill="none" stroke="#1b1c1e" stroke-width="3.2"/><path d="M3135.7 33.9 H3177 V70.1 H3160 L3146.7 78 V70.1 H3135.7 Z" fill="none" stroke="#1b1c1e" stroke-width="3.4"/><path d="M3185 52.7 H3199.7 V88.7 H3189.5 V97 L3176 88.7 H3158.3 V80.5" fill="none" stroke="#1b1c1e" stroke-width="3.4"/></svg><div class="a" style="left:0.00px;top:133.00px;width:158.00px;height:1838.00px;background:#dadbdd;"></div><svg class="a" style="left:0;top:133px" width="158" height="1838" viewBox="0 133 158 1838">
<path d="M55 181.5 L79.2 159.8 L103.5 181.5 M60.6 177 V206 H99 V177 M72.9 206 V190 H86.3 V206" fill="none" stroke="#1b1b1b" stroke-width="2.9"/>
<path d="M67.8 268.5 V259.5 H90.7 V268.5 M62 268.5 H96.5 L102.5 274.5 V302.8 H56 V274.5 Z M56 286.8 H102.5 M69.8 281.5 V293 M88.2 281.5 V293" fill="none" stroke="#1b1b1b" stroke-width="2.9"/>
<path d="M62 359.5 H96.2 V406.3 H62 Z M74 406.3 V394.5 H84.5 V406.3" fill="none" stroke="#1b1b1b" stroke-width="2.9"/>
<rect x="70" y="369.5" width="4.6" height="4.6" fill="#1b1b1b"/><rect x="82.3" y="369.5" width="4.6" height="4.6" fill="#1b1b1b"/>
<rect x="70" y="380" width="4.6" height="4.6" fill="#1b1b1b"/><rect x="82.3" y="380" width="4.6" height="4.6" fill="#1b1b1b"/>
<rect x="23" y="1745.8" width="110" height="5.2" fill="#c3c4c7"/>
<g fill="none" stroke="#1b1b1b" stroke-width="2.9" stroke-linejoin="miter">
<path d="M59 1801.4 L71 1809.2 V1818.1 H62.2 L54.6 1805.3 Z"/>
<path d="M71 1818.1 L80.3 1826.9"/>
<path d="M80.3 1826.9 H90.7 L105.4 1841.6 L94.6 1852.4 L80.3 1838.2 Z"/>
<path d="M70 1826.9 L52.4 1844.6 L60.2 1852.4 L74 1838.4"/>
<path d="M77.9 1806.8 C82 1802.5 90 1801.8 95.6 1804 L85.3 1813.7 V1819.6 H92.1 L101.5 1809.7 C104.5 1815 103.5 1822 99.5 1826.4"/>
</g>
<path d="M63 1909 L80 1926 L63 1943 M82 1909 L99 1926 L82 1943" fill="none" stroke="#1b1b1b" stroke-width="2.9"/>
</svg><svg class="a" style="left:0;top:0" width="157" height="133" viewBox="0 0 157 133">
<rect width="157" height="133" fill="#231f20"/>
<path d="M104.5 35.2 C100 25 88 17 70 16.6 C48 17 30 32 27.5 55 C26 72 35 88 55 100 C70 109 82 120 83.5 133 L108.5 133 C112.5 122 116 112 116 100.5 C116 90 111 80 103.5 74.3 C96 67 88 60 83.4 56.3 C77 52 71 47 69.3 43.2 L62 43.8 C63 41 67 39.5 75 38.7 C85 37.8 100 38 104.5 35.2 Z" fill="#f4f4f4"/>
<path d="M61.8 44 C62.5 49 66 54 73.3 59.3 C80 63.5 90 69 97.4 76.3 C103 82 106.5 92 106.5 100.4 C106.5 110 104 120 96.4 133.5" fill="none" stroke="#231f20" stroke-width="2.3"/>
<path d="M71 57.6 H84 M97.5 75 H104.5 M106 94.4 H116 M106 112 H116.5" stroke="#231f20" stroke-width="2.2"/>
<path d="M69.5 23 C74 21.3 84 22.3 88.5 26 C87 28.2 82 28.7 76 27.2 C73 26.3 71 24.8 69.5 23 Z" fill="#231f20"/>
</svg></body></html>
